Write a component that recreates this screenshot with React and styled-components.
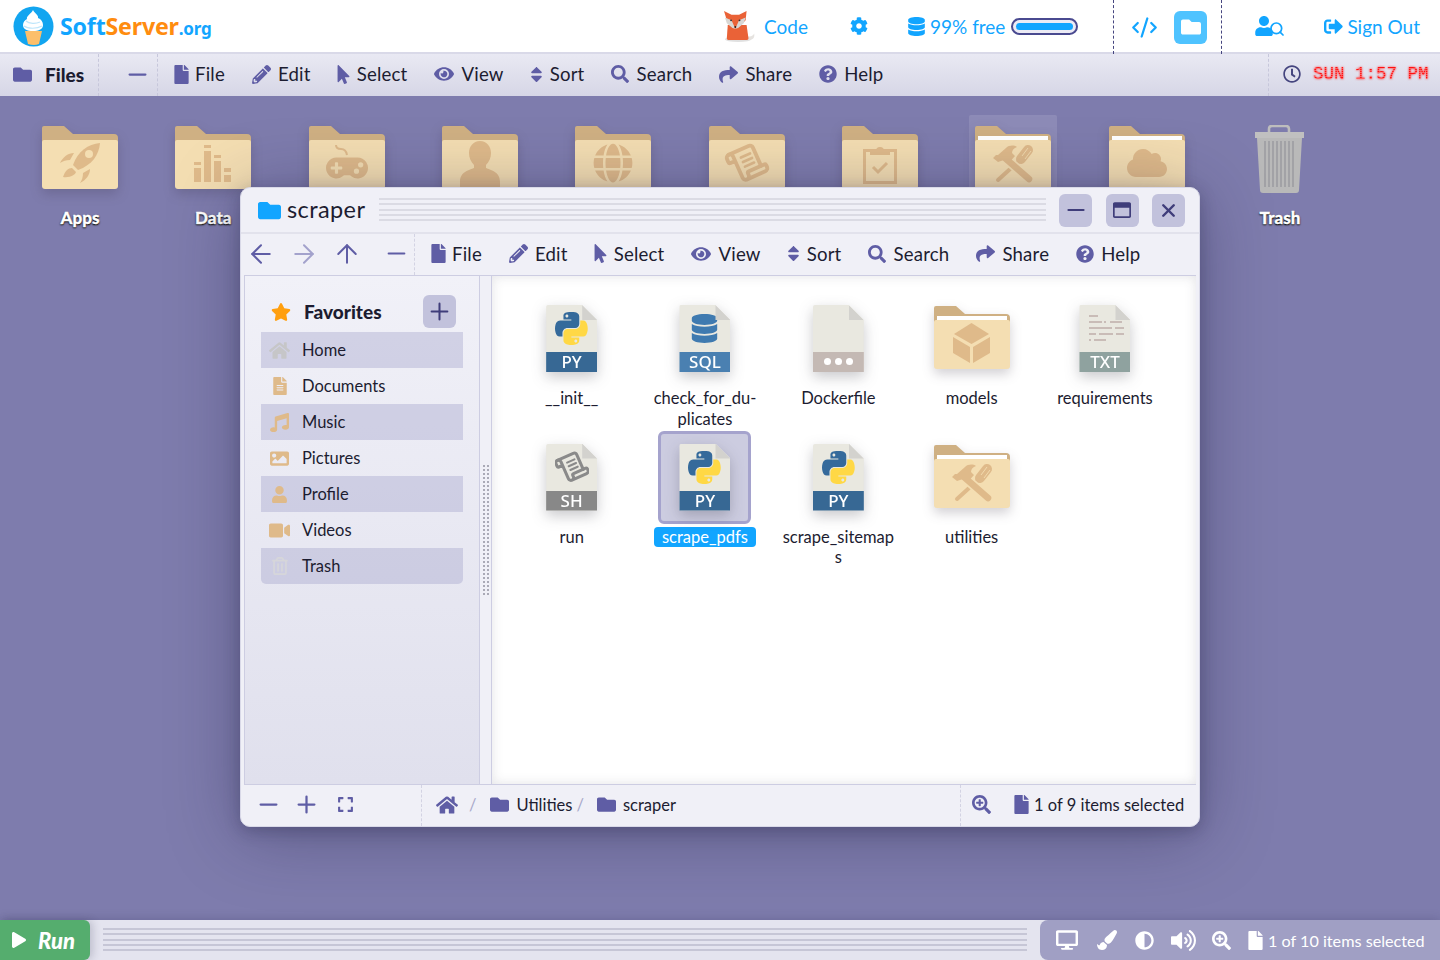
import React from 'react'
import styled, { createGlobalStyle } from 'styled-components'
import {
  FaFolder, FaFile, FaPencilAlt, FaMousePointer, FaEye, FaSort, FaSearch, FaShare, FaQuestionCircle,
  FaCog, FaDatabase, FaUser, FaSignOutAlt, FaRegClock, FaStar, FaHome, FaFileAlt, FaMusic,
  FaImage, FaVideo, FaRegTrashAlt, FaExpand, FaSearchPlus, FaDesktop, FaPaintBrush, FaAdjust,
  FaVolumeUp, FaPlay, FaGamepad, FaGlobe, FaCloud, FaRegWindowMaximize,
} from 'react-icons/fa'
import { FiArrowLeft, FiArrowRight, FiArrowUp, FiSearch, FiMinus, FiPlus, FiX } from 'react-icons/fi'
import { CodeXml } from 'lucide-react'

const FONT = 'Lato, "Open Sans", sans-serif'
const PURPLE = '#5f5da5'
const BLUE = '#12a5ff'
const TAN = '#dfba8a'
const CREAM = '#f4deb2'
const INK = '#1c1c30'

const GlobalStyle = createGlobalStyle`
  html, body {
    margin: 0;
    width: 1440px;
    height: 960px;
    overflow: hidden;
    font-family: ${FONT};
    color: ${INK};
  }
  * { box-sizing: border-box; }
`

const Page = styled.div`
  width: 1440px;
  height: 960px;
  display: flex;
  flex-direction: column;
`

/* feather glyphs only fill 14/24 of their box, this trims the empty sides */
const Thin = styled.span`
  display: flex;
  margin: 0 -6px 0 ${(p) => (p.$push || 0) - 6}px;
`

/* react-icons boxes are square, this gives a glyph the width it really draws */
const Slot = styled.span`
  flex: none;
  width: ${(p) => p.$w}px;
  display: flex;
  justify-content: center;
  svg { flex: none; }
`

/* header */

const Header = styled.header`
  height: 54px;
  flex: none;
  display: flex;
  align-items: center;
  background: #fff;
  border-bottom: 2px solid #d9d9e8;
  color: ${BLUE};
  font-size: 19px;
`

const Brand = styled.div`
  display: flex;
  align-items: center;
  gap: 6px;
  margin-left: 13px;
  margin-right: auto;
  font-family: "Noto Sans", sans-serif;
  font-weight: 700;
  font-size: 23.2px;
  letter-spacing: -0.2px;
`

const Orange = styled.span`
  color: #ff8c0f;
`

const Org = styled.small`
  font-size: 17px;
`

const HeaderLink = styled.div`
  display: flex;
  align-items: center;
  gap: ${(p) => p.$gap || 6}px;
  margin-left: ${(p) => p.$before || 0}px;
  margin-right: ${(p) => p.$after || 0}px;
  svg { flex: none; }
`

const HeaderCell = styled.div`
  align-self: stretch;
  width: 109px;
  display: flex;
  align-items: center;
  justify-content: space-between;
  padding: 0 14px 0 17px;
  margin-bottom: -2px;
  border-left: 1px dashed #45457f;
  border-right: 1px dashed #45457f;
`

const FolderButton = styled.div`
  width: 33px;
  height: 33px;
  border-radius: 6px;
  background: #4fc3ff;
  color: #fff;
  display: flex;
  align-items: center;
  justify-content: center;
`

const Meter = styled.div`
  width: 67px;
  height: 17px;
  padding: 3px;
  margin-left: 2px;
  border: 2px solid #4a4a90;
  border-radius: 9px;
  background: #ecebf5;
`

const MeterFill = styled.div`
  height: 100%;
  border-radius: 5px;
  background: ${BLUE};
`

/* menus */

const MenuBar = styled.div`
  height: 42px;
  flex: none;
  display: flex;
  align-items: stretch;
  background: linear-gradient(#e9e9f3, #d6d6e6);
  position: relative;
  z-index: 1;
`

const FilesTitle = styled.div`
  width: 99px;
  display: flex;
  align-items: center;
  gap: 13px;
  padding: 0 0 2px 13px;
  color: ${PURPLE};
  border-right: 1px dashed #c7c7db;
`

const FilesLabel = styled.b`
  color: ${INK};
  font-size: 19px;
  font-weight: 900;
`

const MinusCell = styled.div`
  width: 59px;
  display: flex;
  align-items: center;
  padding: 0 0 2px 31px;
  color: ${PURPLE};
  border-right: 1px dashed #c7c7db;
`

const MenuRow = styled.div`
  display: flex;
  align-items: center;
  gap: 27px;
  padding: 0 0 2px 16px;
`

const MenuItem = styled.div`
  display: flex;
  align-items: center;
  gap: 7px;
  font-size: 18.6px;
  letter-spacing: 0.2px;
  white-space: nowrap;
  svg { color: ${PURPLE}; }
`

const ClockCell = styled.div`
  margin-left: auto;
  width: 172px;
  display: flex;
  align-items: center;
  gap: 12px;
  padding: 0 0 2px 14px;
  color: #45457f;
  border-left: 1px dashed #c7c7db;
`

const ClockText = styled.div`
  font-family: "Liberation Mono", monospace;
  font-size: 17.5px;
  white-space: pre;
  color: transparent;
  background: repeating-linear-gradient(0deg, #ff1010 0 1.5px, #ff5f5f 1.5px 2px);
  -webkit-background-clip: text;
  background-clip: text;
  filter: drop-shadow(0 0 1px rgba(255, 20, 20, 0.85));
`

const menuItems = [
  [FaFile, 'File', 19, 14],
  [FaPencilAlt, 'Edit', 19, 19],
  [FaMousePointer, 'Select', 19, 12],
  [FaEye, 'View', 20, 20],
  [FaSort, 'Sort', 19, 12],
  [FaSearch, 'Search', 18, 18],
  [FaShare, 'Share', 19, 19],
  [FaQuestionCircle, 'Help', 18, 18],
]

function Menu() {
  return (
    <MenuRow>
      {menuItems.map(([Icon, label, size, w]) => (
        <MenuItem key={label}>
          <Slot $w={w}><Icon size={size} /></Slot>
          {label}
        </MenuItem>
      ))}
    </MenuRow>
  )
}

/* desktop */

const Desktop = styled.main`
  flex: 1;
  position: relative;
  background: #7e7cad;
  padding: 19px 0 0 13.33px;
`

const IconRow = styled.div`
  display: grid;
  grid-template-columns: repeat(10, 133.33px);
`

const DesktopIcon = styled.div`
  display: flex;
  flex-direction: column;
  align-items: center;
  gap: 5px;
`

const DesktopIconBox = styled.div`
  width: 88px;
  height: 88px;
  padding-top: ${(p) => (p.$trash ? 10 : 11)}px;
  display: flex;
  justify-content: center;
  border-radius: 2px;
  background: ${(p) => (p.$active ? 'rgba(255,255,255,0.12)' : 'transparent')};
`

const DesktopLabel = styled.div`
  color: #fff;
  font-weight: 900;
  font-size: 17px;
  line-height: 20px;
  -webkit-text-stroke: 0.3px #fff;
  text-shadow: 0 1px 2px #111, 0 1px 1px #222;
`

const FolderSvg = styled.svg`
  display: block;
  flex: none;
  filter: drop-shadow(0 5px 6px rgba(50, 40, 60, 0.22));
`

function Folder({ open, children }) {
  return (
    <FolderSvg width="76" height="63" viewBox="0 0 76 63">
      <path d="M0 2a2 2 0 0 1 2-2h20l9 8h41a4 4 0 0 1 4 4v10H0z" fill="#cfb083" />
      {open && <rect x="3" y="10" width="70" height="5" fill="#fff" />}
      <path d="M0 16q0-2 2-2h72q2 0 2 2v44q0 3-3 3H3q-3 0-3-3z" fill={CREAM} />
      {children}
    </FolderSvg>
  )
}

function RocketGlyph() {
  return (
    <g transform="translate(18 17)" fill={TAN}>
      <path d="M40 0C28 1 18 8 13 22l5 5C32 22 39 12 40 0z" />
      <circle cx="29" cy="11" r="4" fill={CREAM} />
      <path d="M0 20c3-6 8-10 14-10l-4 7c-4 0-7 1-10 3z" />
      <path d="M20 40c6-3 10-8 10-14l-7 4c0 4-1 7-3 10z" />
      <path d="M3 34c2-6 5-9 9-9l4 4c-1 3-6 6-13 5z" />
    </g>
  )
}

function DataGlyph() {
  const bars = [
    [0, 17, 3, 23, 14], [10, 0, 3, 6, 31], [20, 10, 3, 16, 21], [30, 23, 4, 30, 7],
  ]
  return (
    <g fill={TAN} transform="translate(19 19)">
      {bars.map(([x, a, ah, b, bh]) => (
        <g key={x}>
          <rect x={x} y={a} width="7" height={ah} />
          <rect x={x} y={b} width="7" height={bh} />
        </g>
      ))}
    </g>
  )
}

function PadGlyph() {
  return (
    <g>
      <path d="M27 19q0 4 5 4t6 6" fill="none" stroke={TAN} strokeWidth="2" />
      <FaGamepad size={42} x={17} y={21} color={TAN} />
    </g>
  )
}

function BustGlyph() {
  return (
    <path
      transform="translate(18 15)"
      fill={TAN}
      d="M20 0c7 0 11 6 11 12 0 5-2 9-5 12v3c4 2 14 3 14 14v7H0v-7c0-11 10-12 14-14v-3c-3-3-5-7-5-12C9 6 13 0 20 0z"
    />
  )
}

function ClipGlyph() {
  return (
    <g transform="translate(21 18)" fill={TAN}>
      <rect x="1.5" y="6.5" width="31" height="32" fill="none" stroke={TAN} strokeWidth="3" />
      <path d="M7 11h20V7h-6a4 4 0 0 0-8 0H7z" />
      <path d="M10 23l5 5 9-9" fill="none" stroke={TAN} strokeWidth="3" />
    </g>
  )
}

function CubeGlyph() {
  return (
    <g fill={TAN}>
      <path d="M37.5 17L55 28 37.500 38 20 28z" />
      <path d="M19 31l17 10v16L19 47z" />
      <path d="M39 41l17-10v16L39 57z" />
    </g>
  )
}

function ToolsGlyph() {
  return (
    <g transform="translate(18 19)">
      <path d="M27 15L5 35" stroke={TAN} strokeWidth="4" strokeLinecap="round" />
      <path d="M35 5l-7 9" stroke={TAN} strokeWidth="10" strokeLinecap="round" />
      <path d="M35 3l-6 8M38 6l-6 8" stroke={CREAM} strokeWidth="0.9" />
      <path d="M12 13l25 22" stroke={CREAM} strokeWidth="10" />
      <path d="M12 13l24 21" stroke={TAN} strokeWidth="6.5" strokeLinecap="round" />
      <path d="M0 13l3-3 2 0 8-7c3-3 8-3 11-1-3 1-5 3-5 6l3 3-7 8-4-4-3 1-3 1z" fill={TAN} />
    </g>
  )
}

function ScrollGlyph({ color = TAN, x = 18, y = 17, size = 40 }) {
  const k = size / 24
  return (
    <g transform={`translate(${x} ${y}) rotate(-24 ${size / 2} ${size / 2}) scale(${k})`}
      fill="none" stroke={color} strokeWidth="2.3" strokeLinecap="round">
      <path d="M19 17V5a2 2 0 0 0-2-2H4" />
      <path d="M8 21h12a2 2 0 0 0 2-2v-1a1 1 0 0 0-1-1H11a1 1 0 0 0-1 1v1a2 2 0 1 1-4 0V5a2 2 0 1 0-4 0v2a1 1 0 0 0 1 1h3" />
      <path d="M10 7.500h6M10 10.500h6M10 13.500h6" strokeWidth="1.6" />
    </g>
  )
}

function TrashIcon() {
  const slats = [9, 13, 17, 21, 25, 29, 33, 37]
  return (
    <svg width="50" height="68" viewBox="0 0 50 68">
      <path d="M14 8V4q0-3 3-3h14q3 0 3 3v4" fill="none" stroke="#bdbdbd" strokeWidth="2.6" />
      <rect x="0" y="7" width="49" height="6" fill="#c0c0c0" />
      <path d="M2 13h45l-3 52q0 3-3 3H8q-3 0-3-3z" fill="#b9b9b9" />
      {slats.map((x) => (
        <rect key={x} x={x} y="16" width="2" height="46" fill="#a2a2a6" />
      ))}
    </svg>
  )
}

const desktopIcons = [
  ['Apps', <RocketGlyph />],
  ['Data', <DataGlyph />],
  [null, <PadGlyph />],
  [null, <BustGlyph />],
  [null, <FaGlobe size={40} x={18} y={17} color={TAN} />],
  [null, <ScrollGlyph />],
  [null, <ClipGlyph />],
  [null, <ToolsGlyph />, { open: true, active: true }],
  [null, <FaCloud size={40} x={18} y={17} color={TAN} />, { open: true }],
]

/* window */

const Window = styled.section`
  position: absolute;
  left: 240px;
  top: 91px;
  width: 960px;
  height: 640px;
  display: flex;
  flex-direction: column;
  background: #f0f0f7;
  border: 1px solid #d9d9e8;
  border-radius: 10px;
  box-shadow: 0 4px 16px rgba(30, 28, 60, 0.28), 0 8px 70px rgba(30, 28, 60, 0.36);
  z-index: 2;
`

const TitleBar = styled.div`
  height: 46px;
  flex: none;
  display: flex;
  align-items: center;
  padding: 0 14px 0 17px;
  border-bottom: 2px solid #e2e2ec;
  color: ${BLUE};
`

const TitleText = styled.div`
  margin: 0 14px 2px 6px;
  color: ${INK};
  font-size: 23.5px;
  letter-spacing: 0.4px;
`

const Stripes = styled.div`
  flex: 1;
  height: 25px;
  background: repeating-linear-gradient(180deg, ${(p) => p.$color} 0 2px, transparent 2px 5.3px);
`

const WindowButtons = styled.div`
  display: flex;
  gap: 13.5px;
  margin-left: 13px;
`

const WindowButton = styled.div`
  width: 33px;
  height: 33px;
  border-radius: 6px;
  background: #c2c2dc;
  color: #3f3d7a;
  display: flex;
  align-items: center;
  justify-content: center;
`

const WindowBar = styled.div`
  height: 41px;
  flex: none;
  display: flex;
  align-items: stretch;
`

const NavCell = styled.div`
  width: 174px;
  display: flex;
  align-items: center;
  padding: 0 0 2px 11px;
  gap: 25px;
  color: ${PURPLE};
  border-right: 1px dashed #d3d3e3;
`

const NavIcon = styled(Thin)`
  color: ${(p) => (p.$muted ? '#a3a2cc' : PURPLE)};
`

const Body = styled.div`
  flex: 1;
  min-height: 0;
  display: flex;
  margin: 0 3px;
  border-top: 1px solid #cdcde2;
  border-bottom: 1px solid #cdcde2;
`

const Sidebar = styled.nav`
  width: 236px;
  flex: none;
  padding: 19px 16px 0;
  background: linear-gradient(#f1f1f8, #e0e0ed);
  border-left: 1px solid #cdcde2;
  border-right: 1px solid #cdcde2;
`

const FavHead = styled.div`
  height: 33px;
  margin-bottom: 4px;
  display: flex;
  align-items: center;
  padding: 0 7px 0 10px;
  color: #ff9f0f;
`

const FavTitle = styled.b`
  flex: 1;
  margin: 0 0 1px 13px;
  color: ${INK};
  font-size: 19px;
  font-weight: 900;
`

const SideItem = styled.div`
  height: 36px;
  display: flex;
  align-items: center;
  font-size: 16.5px;
  background: ${(p) => (p.$even ? 'rgba(168, 168, 205, 0.42)' : 'transparent')};
  border-radius: ${(p) => (p.$last ? '0 0 5px 5px' : '0')};
`

const SideIcon = styled.span`
  width: 41px;
  padding-right: 4px;
  display: flex;
  justify-content: center;
  color: ${(p) => p.$color || TAN};
`

const Splitter = styled.div`
  width: 12px;
  flex: none;
  display: flex;
  align-items: center;
  justify-content: center;
  border-right: 1px solid #cdcde2;
`

const SplitterDots = styled.div`
  width: 8px;
  height: 132px;
  background-image: radial-gradient(#aaaab6 1.4px, transparent 1.5px);
  background-size: 4px 4px;
`

const FilePane = styled.div`
  flex: 1;
  padding: 16px 0 0 13px;
  background: #fff;
  box-shadow: inset 0 0 12px rgba(60, 60, 80, 0.14);
  display: grid;
  grid-template-columns: repeat(5, 133.33px);
  grid-auto-rows: 138.6px;
`

const FileItem = styled.div`
  display: flex;
  flex-direction: column;
  align-items: center;
`

const FileBox = styled.div`
  width: 93px;
  height: 93px;
  padding-top: ${(p) => (p.$folder ? 11 : 10)}px;
  display: flex;
  justify-content: center;
  border: 3px solid ${(p) => (p.$selected ? '#a5a3cd' : 'transparent')};
  border-radius: 6px;
  background: ${(p) => (p.$selected ? '#ccccE0' : 'transparent')};
`

const FileLabel = styled.div`
  margin-top: 3px;
  padding: 0 ${(p) => (p.$selected ? 8 : 0)}px;
  min-height: 20px;
  font-size: 16.5px;
  line-height: 20.5px;
  text-align: center;
  white-space: pre-line;
  border-radius: 4px;
  color: ${(p) => (p.$selected ? '#fff' : INK)};
  background: ${(p) => (p.$selected ? BLUE : 'transparent')};
`

const DocShadow = styled.div`
  flex: none;
  filter: drop-shadow(0 5px 7px rgba(40, 40, 50, 0.25));
`

const Doc = styled.div`
  position: relative;
  width: 51px;
  height: 67px;
  display: flex;
  flex-direction: column;
  background: #e9e8e0;
  border-radius: 2px;
  clip-path: polygon(0 0, 36px 0, 51px 15px, 51px 67px, 0 67px);
`

const DocFold = styled.div`
  position: absolute;
  top: 0;
  right: 0;
  width: 15px;
  height: 15px;
  background: #d3d2ce;
  clip-path: polygon(0 0, 100% 100%, 0 100%);
`

const DocGlyph = styled.div`
  flex: 1;
  display: flex;
  align-items: center;
  justify-content: center;
`

const DocBand = styled.div`
  height: 20px;
  padding-bottom: 1px;
  display: flex;
  align-items: center;
  justify-content: center;
  gap: 4px;
  background: ${(p) => p.$color};
  color: #fff;
  font-family: "Noto Sans", sans-serif;
  font-weight: 500;
  font-size: 17px;
`

const DocDot = styled.i`
  width: 7px;
  height: 7px;
  border-radius: 50%;
  background: #fff;
`

function PythonLogo() {
  return (
    <svg width="33" height="33" viewBox="0 0 112 112">
      <path fill="#356a9b" d="M54.919 0c-4.584.022-8.961.413-12.812 1.095C30.76 3.099 28.7 7.295 28.7 15.032v10.219h26.813v3.406H18.638c-7.793 0-14.616 4.684-16.75 13.594-2.462 10.213-2.571 16.586 0 27.25 1.906 7.938 6.457 13.594 14.25 13.594h9.218v-12.25c0-8.85 7.657-16.656 16.75-16.656h26.782c7.454 0 13.406-6.138 13.406-13.625V15.032c0-7.266-6.13-12.725-13.406-13.937C64.282.328 59.502-.02 54.918 0zm-14.5 8.218c2.77 0 5.031 2.299 5.031 5.125 0 2.816-2.262 5.094-5.031 5.094-2.78 0-5.031-2.278-5.031-5.094 0-2.826 2.252-5.125 5.031-5.125z" />
      <path fill="#ffd845" d="M85.638 28.657v11.906c0 9.231-7.826 17-16.75 17H42.106c-7.336 0-13.406 6.279-13.406 13.625v25.531c0 7.266 6.319 11.54 13.406 13.625 8.488 2.496 16.627 2.947 26.782 0 6.75-1.954 13.406-5.888 13.406-13.625V86.5H55.513v-3.406h40.187c7.793 0 10.696-5.436 13.406-13.594 2.799-8.399 2.68-16.476 0-27.25-1.926-7.757-5.604-13.594-13.406-13.594zM70.575 93.313c2.78 0 5.031 2.278 5.031 5.094 0 2.826-2.252 5.125-5.031 5.125-2.77 0-5.031-2.299-5.031-5.125 0-2.816 2.262-5.094 5.031-5.094z" />
    </svg>
  )
}

function TextLines() {
  const rows = [
    [[6, 9]],
    [[6, 13], [21, 2], [27, 12]],
    [[6, 23], [32, 9]],
    [[6, 7], [16, 14], [33, 8]],
    [[6, 2], [11, 12]],
  ]
  return (
    <svg width="44" height="34" viewBox="0 0 44 34">
      {rows.map((row, i) =>
        row.map(([x, w]) => <rect key={`${i}-${x}`} x={x} y={3 + i * 6} width={w} height="2" fill="#c9bcb7" />)
      )}
    </svg>
  )
}

function DocIcon({ band, color, children }) {
  return (
    <DocShadow>
      <Doc>
        <DocFold />
        <DocGlyph>{children}</DocGlyph>
        <DocBand $color={color}>{band}</DocBand>
      </Doc>
    </DocShadow>
  )
}

const files = [
  ['__init__', <DocIcon band="PY" color="#376894"><PythonLogo /></DocIcon>],
  ['check_for_du-\nplicates', <DocIcon band="SQL" color="#4a80b1"><FaDatabase size={29} color="#3f7ab0" /></DocIcon>],
  ['Dockerfile', <DocIcon band={<><DocDot /><DocDot /><DocDot /></>} color="#c4b9b4" />],
  ['models', <Folder open><CubeGlyph /></Folder>, { folder: true }],
  ['requirements', <DocIcon band="TXT" color="#8fa29f"><TextLines /></DocIcon>],
  ['run', (
    <DocIcon band="SH" color="#888888">
      <svg width="34" height="34" viewBox="0 0 34 34"><ScrollGlyph color="#8a8a8a" x={1} y={1} size={32} /></svg>
    </DocIcon>
  )],
  ['scrape_pdfs', <DocIcon band="PY" color="#376894"><PythonLogo /></DocIcon>, { selected: true }],
  ['scrape_sitemap\ns', <DocIcon band="PY" color="#376894"><PythonLogo /></DocIcon>],
  ['utilities', <Folder open><ToolsGlyph /></Folder>, { folder: true }],
]

const favorites = [
  ['Home', FaHome, 21, '#c6c6c8'],
  ['Documents', FaFileAlt, 18],
  ['Music', FaMusic, 19],
  ['Pictures', FaImage, 19],
  ['Profile', FaUser, 17],
  ['Videos', FaVideo, 21],
  ['Trash', FaRegTrashAlt, 18, '#d6d6da'],
]

const StatusBar = styled.div`
  height: 41px;
  flex: none;
  display: flex;
  align-items: stretch;
  font-size: 16.5px;
`

const ZoomCell = styled.div`
  width: 181px;
  display: flex;
  align-items: center;
  gap: 23px;
  padding: 0 0 2px 20px;
  color: ${PURPLE};
  border-right: 1px dashed #d3d3e3;
`

const Crumbs = styled.div`
  flex: 1;
  display: flex;
  align-items: center;
  padding: 0 0 2px 14px;
  color: ${PURPLE};
`

const CrumbText = styled.span`
  color: ${INK};
  margin-left: 7px;
`

const Slash = styled.span`
  color: #a9a9ca;
  margin: 0 ${(p) => p.$right}px 0 ${(p) => p.$left}px;
`

const CountCell = styled.div`
  width: 239px;
  display: flex;
  align-items: center;
  padding: 0 0 2px 11px;
  color: ${PURPLE};
  border-left: 1px dashed #d3d3e3;
`

const CountZoom = styled.span`
  display: flex;
  margin-right: 23px;
`

const CountText = styled.span`
  color: ${INK};
  margin-left: 6px;
  white-space: nowrap;
`

/* task bar */

const TaskBar = styled.footer`
  height: 40px;
  flex: none;
  display: flex;
  align-items: center;
  background: #e4e4ef;
  position: relative;
  z-index: 1;
  box-shadow: 0 0 10px rgba(40, 40, 70, 0.25);
`

const RunButton = styled.div`
  width: 90px;
  height: 40px;
  display: flex;
  align-items: center;
  gap: 12px;
  padding-left: 12px;
  background: #55ad6e;
  color: #fff;
  font-size: 22px;
  font-weight: 900;
  font-style: italic;
  border-radius: 0 6px 6px 0;
  box-shadow: 3px 0 8px rgba(40, 40, 70, 0.2);
`

const TaskStripes = styled(Stripes)`
  margin: 0 13px;
`

const TrayPanel = styled.div`
  width: 400px;
  height: 40px;
  display: flex;
  align-items: center;
  padding-left: 16px;
  background: #a09fc4;
  color: #fff;
  font-size: 16.2px;
  border-radius: 8px 0 0 8px;
  white-space: nowrap;
`

const TrayIcon = styled(Slot)`
  margin-right: ${(p) => p.$after}px;
`

function BrandMark() {
  return (
    <svg width="41" height="41" viewBox="0 0 41 41">
      <circle cx="20.5" cy="20.5" r="20" fill="#12a5f0" />
      <path d="M12 25h17l-3 13q-5 2-11 0z" fill="#fcbf6b" />
      <path d="M20 4c1 3 6 5 5 8 3 1 5 4 5 7 0 4-4 6-10 6s-10-2-10-6c0-3 2-5 4-6-1-3 4-5 6-9z" fill="#fff" />
      <path d="M13 15c3 3 10 3 14 1M11 20c4 3 13 3 18 0" fill="none" stroke="#bfe6fb" strokeWidth="1.2" />
    </svg>
  )
}

function Fox() {
  return (
    <svg width="34" height="32" viewBox="0 0 36 34">
      <ellipse cx="16" cy="31" rx="14" ry="3" fill="#000" opacity="0.12" />
      <path d="M26 28c4 1 6-1 7-3 1 4-1 7-6 7z" fill="#e6e3e0" />
      <path d="M5 16h20l2 14q0 2-3 2H7q-3 0-3-2z" fill="#ea6237" />
      <path d="M1 1l8 4h8l8-4-1 10-9 9-1 1-1-1-9-9z" fill="#ea6237" />
      <path d="M2 8l7 3 4 9-3-1-6-5zM24 8l-7 3-4 9 3-1 6-5z" fill="#d9d7d4" />
      <circle cx="8.500" cy="11" r="1" fill="#333" />
      <circle cx="17.500" cy="11" r="1" fill="#333" />
      <circle cx="13" cy="18" r="1" fill="#222" />
    </svg>
  )
}

function UserSearch() {
  return (
    <svg width="30" height="20" viewBox="0 0 30 20">
      <FaUser size={20} x={0} y={0} color={BLUE} />
      <FiSearch size={16} x={15} y={5} color={BLUE} strokeWidth={2.6} />
    </svg>
  )
}

export default function App() {
  return (
    <Page>
      <GlobalStyle />
      <Header>
        <Brand>
          <BrandMark />
          <span>Soft<Orange>Server</Orange><Org>.org</Org></span>
        </Brand>
        <HeaderLink $gap={7} $after={42}><Fox />Code</HeaderLink>
        <HeaderLink $after={39}><FaCog size={18} /></HeaderLink>
        <HeaderLink $gap={4} $after={35}><FaDatabase size={19} />99% free<Meter><MeterFill /></Meter></HeaderLink>
        <HeaderCell>
          <CodeXml size={27} strokeWidth={2} />
          <FolderButton><FaFolder size={20} /></FolderButton>
        </HeaderCell>
        <HeaderLink $before={32} $after={40}><UserSearch /></HeaderLink>
        <HeaderLink $gap={4} $after={20}><FaSignOutAlt size={19} />Sign Out</HeaderLink>
      </Header>

      <MenuBar>
        <FilesTitle><FaFolder size={19} /><FilesLabel>Files</FilesLabel></FilesTitle>
        <MinusCell><Thin><FiMinus size={27} /></Thin></MinusCell>
        <Menu />
        <ClockCell>
          <FaRegClock size={18} />
          <ClockText>SUN 1:57 PM</ClockText>
        </ClockCell>
      </MenuBar>

      <Desktop>
        <IconRow>
          {desktopIcons.map(([label, glyph, opts = {}], i) => (
            <DesktopIcon key={i}>
              <DesktopIconBox $active={opts.active}>
                <Folder open={opts.open}>{glyph}</Folder>
              </DesktopIconBox>
              {label && <DesktopLabel>{label}</DesktopLabel>}
            </DesktopIcon>
          ))}
          <DesktopIcon>
            <DesktopIconBox $trash><TrashIcon /></DesktopIconBox>
            <DesktopLabel>Trash</DesktopLabel>
          </DesktopIcon>
        </IconRow>

        <Window>
          <TitleBar>
            <FaFolder size={23} />
            <TitleText>scraper</TitleText>
            <Stripes $color="#dbdbe4" />
            <WindowButtons>
              <WindowButton><FiMinus size={26} strokeWidth={1.9} /></WindowButton>
              <WindowButton><FaRegWindowMaximize size={18} /></WindowButton>
              <WindowButton><FiX size={21} strokeWidth={2.8} /></WindowButton>
            </WindowButtons>
          </TitleBar>

          <WindowBar>
            <NavCell>
              <NavIcon><FiArrowLeft size={30} strokeWidth={1.6} /></NavIcon>
              <NavIcon $muted><FiArrowRight size={30} strokeWidth={1.6} /></NavIcon>
              <NavIcon><FiArrowUp size={30} strokeWidth={1.6} /></NavIcon>
              <NavIcon $push={8}><FiMinus size={27} strokeWidth={1.8} /></NavIcon>
            </NavCell>
            <Menu />
          </WindowBar>

          <Body>
            <Sidebar>
              <FavHead>
                <FaStar size={20} />
                <FavTitle>Favorites</FavTitle>
                <WindowButton><FiPlus size={27} strokeWidth={1.8} /></WindowButton>
              </FavHead>
              {favorites.map(([label, Icon, size, color], i) => (
                <SideItem key={label} $even={i % 2 === 0} $last={i === favorites.length - 1}>
                  <SideIcon $color={color}><Icon size={size} /></SideIcon>
                  {label}
                </SideItem>
              ))}
            </Sidebar>
            <Splitter><SplitterDots /></Splitter>
            <FilePane>
              {files.map(([label, icon, opts = {}]) => (
                <FileItem key={label}>
                  <FileBox $selected={opts.selected} $folder={opts.folder}>{icon}</FileBox>
                  <FileLabel $selected={opts.selected}>{label}</FileLabel>
                </FileItem>
              ))}
            </FilePane>
          </Body>

          <StatusBar>
            <ZoomCell>
              <Thin><FiMinus size={27} /></Thin>
              <Thin><FiPlus size={27} /></Thin>
              <FaExpand size={17} />
            </ZoomCell>
            <Crumbs>
              <FaHome size={22} />
              <Slash $left={11} $right={14}>/</Slash>
              <FaFolder size={19} />
              <CrumbText>Utilities</CrumbText>
              <Slash $left={4} $right={13}>/</Slash>
              <FaFolder size={19} />
              <CrumbText>scraper</CrumbText>
            </Crumbs>
            <CountCell>
              <CountZoom><FaSearchPlus size={19} /></CountZoom>
              <Slot $w={14}><FaFile size={19} /></Slot>
              <CountText>1 of 9 items selected</CountText>
            </CountCell>
          </StatusBar>
        </Window>
      </Desktop>

      <TaskBar>
        <RunButton><Slot $w={14}><FaPlay size={16} /></Slot>Run</RunButton>
        <TaskStripes $color="#c6c6d6" />
        <TrayPanel>
          <TrayIcon $w={22} $after={19}><FaDesktop size={22} /></TrayIcon>
          <TrayIcon $w={20} $after={18}><FaPaintBrush size={20} /></TrayIcon>
          <TrayIcon $w={19} $after={17}><FaAdjust size={19} /></TrayIcon>
          <TrayIcon $w={25} $after={16}><FaVolumeUp size={25} /></TrayIcon>
          <TrayIcon $w={19} $after={17}><FaSearchPlus size={19} /></TrayIcon>
          <TrayIcon $w={14} $after={6}><FaFile size={19} /></TrayIcon>
          1 of 10 items selected
        </TrayPanel>
      </TaskBar>
    </Page>
  )
}
